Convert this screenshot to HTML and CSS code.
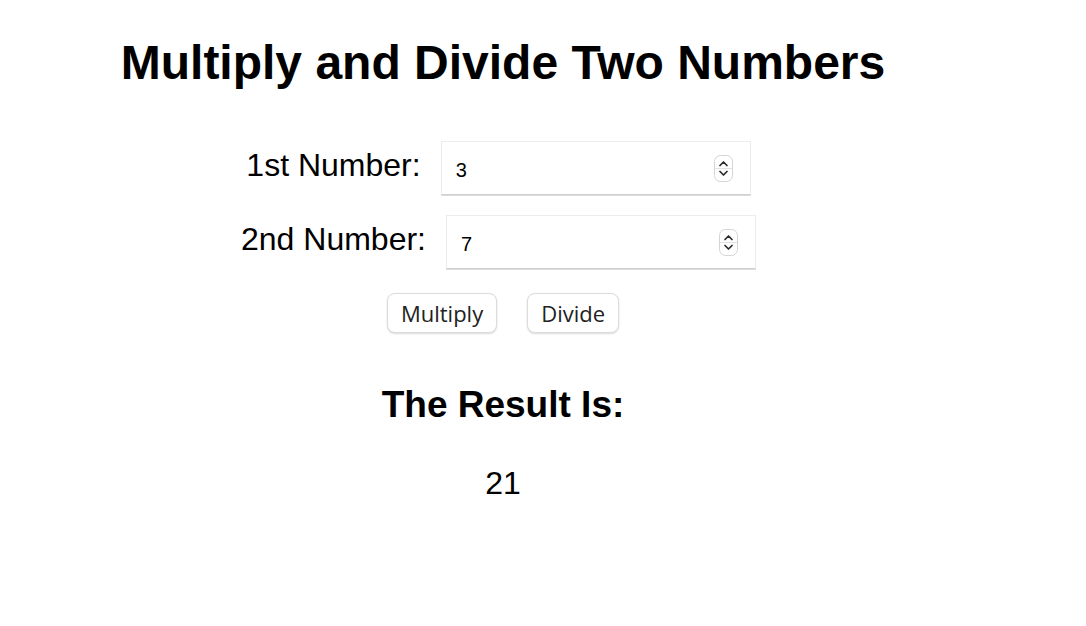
FILE: index.html
```html
<!DOCTYPE html>
<html lang="en">
<head>
<meta charset="utf-8">
<title>Multiply and Divide Two Numbers</title>
<link rel="stylesheet" href="styles.css">
</head>
<body>
<main class="app">
  <h1 class="title">Multiply and Divide Two Numbers</h1>
  <form class="form">
    <div class="row">
      <label class="label" for="n1">1st Number:</label>
      <div class="field">
        <input class="field-input" id="n1" type="text" value="3">
        <svg class="spinner" width="19" height="27" viewBox="0 0 19 27" aria-hidden="true">
          <rect x="0.5" y="0.5" width="18" height="26" rx="6" fill="#fff" stroke="#d4d4d4"/>
          <line x1="1" y1="13.5" x2="18" y2="13.5" stroke="#e2e2e2"/>
          <path d="M6 10.5 L9.5 7 L13 10.5" fill="none" stroke="#2b2b2b" stroke-width="1.7" stroke-linecap="round" stroke-linejoin="round"/>
          <path d="M6 16.5 L9.5 20 L13 16.5" fill="none" stroke="#2b2b2b" stroke-width="1.7" stroke-linecap="round" stroke-linejoin="round"/>
        </svg>
      </div>
    </div>
    <div class="row">
      <label class="label" for="n2">2nd Number:</label>
      <div class="field">
        <input class="field-input" id="n2" type="text" value="7">
        <svg class="spinner" width="19" height="27" viewBox="0 0 19 27" aria-hidden="true">
          <rect x="0.5" y="0.5" width="18" height="26" rx="6" fill="#fff" stroke="#d4d4d4"/>
          <line x1="1" y1="13.5" x2="18" y2="13.5" stroke="#e2e2e2"/>
          <path d="M6 10.5 L9.5 7 L13 10.5" fill="none" stroke="#2b2b2b" stroke-width="1.7" stroke-linecap="round" stroke-linejoin="round"/>
          <path d="M6 16.5 L9.5 20 L13 16.5" fill="none" stroke="#2b2b2b" stroke-width="1.7" stroke-linecap="round" stroke-linejoin="round"/>
        </svg>
      </div>
    </div>
    <div class="actions">
      <button class="btn" type="button">Multiply</button>
      <button class="btn" type="button">Divide</button>
    </div>
  </form>
  <h2 class="result-title">The Result Is:</h2>
  <p class="result">21</p>
</main>
</body>
</html>
```
FILE: styles.css
```css
html, body {
  margin: 0;
  padding: 0;
  background: #fff;
}

body {
  font-family: "Liberation Sans", Arial, sans-serif;
  color: #000;
}

.app {
  width: 1006px;
  display: flex;
  flex-direction: column;
  align-items: center;
}

.title {
  margin: 35px 0 0;
  font-size: 48px;
  line-height: 56px;
  font-weight: bold;
}

.form {
  margin-top: 50px;
  display: flex;
  flex-direction: column;
  align-items: center;
  gap: 20px;
}

.row {
  display: flex;
  align-items: center;
  gap: 20px;
  padding-right: 9px;
}

.label {
  font-size: 32px;
  line-height: 40px;
  margin-bottom: 6px;
}

.field {
  width: 310px;
  height: 54px;
  box-sizing: border-box;
  display: flex;
  align-items: center;
  padding: 0 17px 0 14px;
  border: 1px solid #ececec;
  border-bottom-color: #cfcfcf;
  box-shadow: 0 1px 0 #dcdcdc;
  background: #fff;
}

.field-input {
  flex: 1;
  min-width: 0;
  border: 0;
  outline: 0;
  padding: 0;
  margin: 0;
  font-family: "Liberation Sans", Arial, sans-serif;
  font-size: 20px;
  color: #000;
  background: transparent;
  position: relative;
  top: 2px;
}

.spinner {
  flex: none;
  display: block;
}

.actions {
  margin-top: 4px;
  display: flex;
  gap: 30px;
}

.btn {
  height: 40px;
  padding: 0 13px;
  font-family: "Open Sans", sans-serif;
  font-size: 22px;
  color: #222;
  background: #fff;
  border: 1px solid #dcdcdc;
  border-radius: 8px;
  box-shadow: 0 1px 2px rgba(0, 0, 0, 0.15);
}

.result-title {
  margin: 50px 0 0;
  font-size: 37px;
  line-height: 44px;
  font-weight: bold;
}

.result {
  margin: 37px 0 0;
  font-size: 32px;
  line-height: 38px;
}
```
